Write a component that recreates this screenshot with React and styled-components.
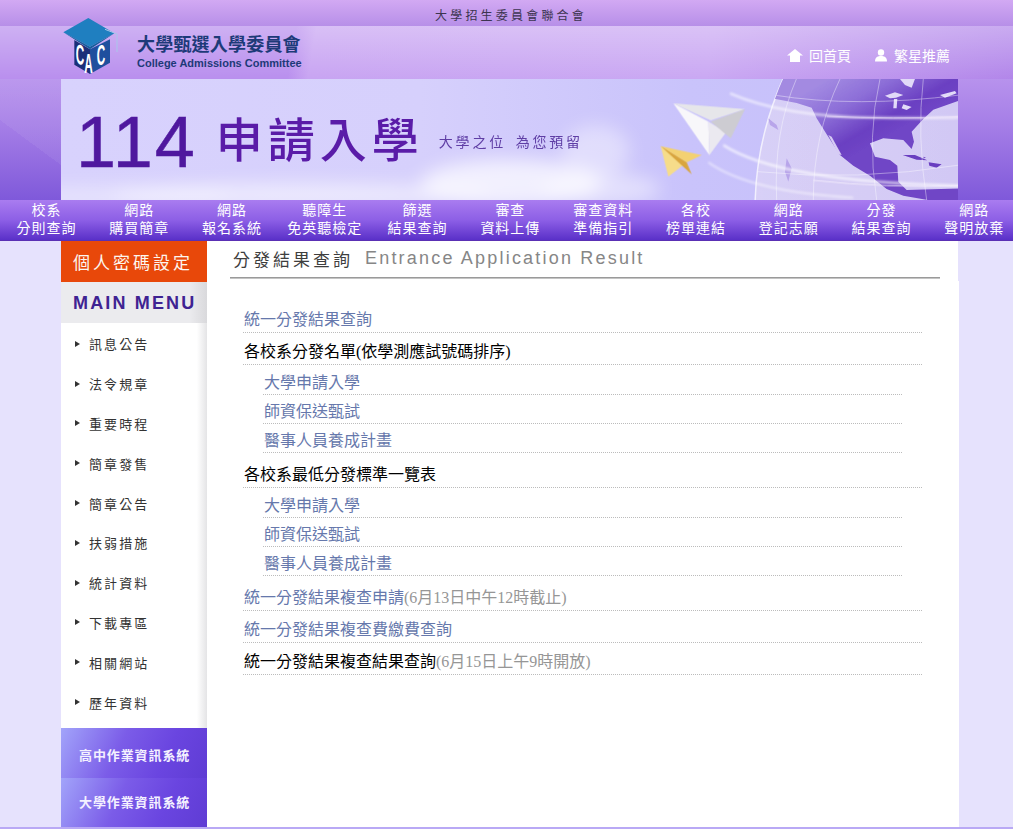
import styled, { createGlobalStyle } from 'styled-components';

const cjk = '"Noto Sans CJK TC", "Noto Sans CJK SC", sans-serif';

const GlobalStyle = createGlobalStyle`
  html, body {
    margin: 0;
    padding: 0;
    overflow-x: hidden;
    background: #e6e2fd;
    font-family: "Liberation Sans", ${cjk};
  }
  a { text-decoration: none; color: inherit; }
  ul { list-style: none; margin: 0; padding: 0; }
`;

const Page = styled.div`
  width: 1013px;
  height: 829px;
  overflow: hidden;
  background: #e6e2fd;
`;

const Hero = styled.header`
  height: 200px;
  background:
    linear-gradient(to top right, rgba(255,255,255,0) 50%, rgba(255,255,255,.06) 50%) 0 120px / 61px 45px no-repeat,
    linear-gradient(rgba(255,255,255,.06), rgba(255,255,255,.06)) 0 79px / 61px 41px no-repeat,
    linear-gradient(180deg, #c8a1f0 0, #bb96ee 70px, #a37ce6 130px, #7f59da 200px);
`;

const TopBar = styled.div`
  height: 26px;
  display: flex;
  align-items: center;
  justify-content: center;
  font-size: 12px;
  letter-spacing: 3.2px;
  color: #3c3450;
  padding: 2px 0 0 9px;
  box-sizing: border-box;
  background: linear-gradient(180deg, #d2a9f3, #b78fe8);
`;

const Band = styled.div`
  height: 53px;
  padding: 0 63px 0 62px;
  display: flex;
  align-items: center;
  justify-content: space-between;
  background:
    linear-gradient(180deg, rgba(255,255,255,.3), rgba(255,255,255,0)),
    linear-gradient(100deg, #b98fee 0 29%, #c8a4f2 31%, #caa8f3 70%, #b286ea 100%);
`;

const Brand = styled.div`
  display: flex;
  align-items: flex-start;
`;

const LogoMark = styled.svg`
  width: 60px;
  height: 60px;
  margin-top: -13px;
  margin-bottom: -3px;
  margin-right: 15px;
  flex: none;
  overflow: visible;
`;

const BrandText = styled.div`
  display: flex;
  flex-direction: column;
  margin-top: 2px;
`;

const BrandName = styled.div`
  font-size: 18px;
  line-height: 24px;
  font-weight: 700;
  letter-spacing: .2px;
  color: #1d3a78;
`;

const BrandSub = styled.div`
  font-size: 11px;
  line-height: 13px;
  font-weight: 700;
  color: #1d3a78;
`;

const QuickLinks = styled.nav`
  display: flex;
  gap: 23px;
  margin-top: 6px;
`;

const QuickLink = styled.a`
  display: flex;
  align-items: center;
  gap: 6px;
  font-size: 14px;
  color: #fff;
  line-height: 20px;
`;

const Banner = styled.div`
  position: relative;
  width: 897px;
  height: 121px;
  margin-left: 61px;
  overflow: hidden;
  display: flex;
  align-items: center;
  padding-left: 15px;
  box-sizing: border-box;
  background: linear-gradient(90deg, #d8d2fd 0, #d6d0fc 40%, #c9c3fb 70%, #c6bffa 100%);
`;

const BannerArt = styled.svg`
  position: absolute;
  inset: 0;
  width: 100%;
  height: 100%;
`;

const BannerYear = styled.div`
  position: relative;
  font-size: 72px;
  line-height: 72px;
  color: #4f189e;
  letter-spacing: 2px;
  margin-top: 4px;
  -webkit-text-stroke: .5px #4f189e;
`;

const BannerTitle = styled.h1`
  position: relative;
  margin: 0 0 6px 19px;
  font-family: ${cjk};
  font-size: 47px;
  line-height: 60px;
  font-weight: 500;
  letter-spacing: 5px;
  color: #5a1ca8;
`;

const BannerSlogan = styled.div`
  position: relative;
  margin: 3px 0 0 15px;
  font-size: 14px;
  letter-spacing: 2.8px;
  color: #5f3ea5;
  word-spacing: 3px;
`;

const MainNav = styled.nav`
  height: 40px;
  display: grid;
  grid-template-columns: repeat(11, 92.8px);
  background: linear-gradient(180deg, #a97cf0 0, #8d5fe6 50%, #5a30c8 100%);
  border-bottom: 1px solid #5a30b4;
`;

const NavItem = styled.a`
  display: flex;
  flex-direction: column;
  align-items: center;
  justify-content: center;
  padding-bottom: 2px;
  font-size: 14px;
  line-height: 18px;
  letter-spacing: 1px;
  color: #fff;
  white-space: nowrap;
`;

const Main = styled.main`
  height: 586px;
  margin-left: 61px;
  display: flex;
`;

const Sidebar = styled.aside`
  width: 146px;
  flex: none;
  display: flex;
  flex-direction: column;
  background: #fff;
`;

const PasswordButton = styled.a`
  height: 41px;
  box-sizing: border-box;
  padding: 0 0 1px 12px;
  display: flex;
  align-items: center;
  background: #e8480a;
  color: #fdf6ef;
  font-size: 17px;
  letter-spacing: 3px;
`;

const MenuTitle = styled.div`
  height: 41px;
  box-sizing: border-box;
  padding: 2px 0 0 12px;
  display: flex;
  align-items: center;
  background: linear-gradient(90deg, #ebebee 88%, #d9d9dc 100%);
  color: #3f2392;
  font-size: 18px;
  font-weight: 700;
  letter-spacing: 2.15px;
`;

const Menu = styled.ul`
  height: 405px;
  box-sizing: border-box;
  padding-top: 1px;
  background: linear-gradient(90deg, #fff 93%, #e4e4e6 100%);
`;

const MenuItem = styled.li`
  height: 39.8px;
  display: flex;
  align-items: center;
  padding-left: 14px;
  font-size: 13px;
  letter-spacing: 2.1px;
  color: #333;
  &::before {
    content: "";
    margin-right: 9px;
    border-left: 5px solid #333;
    border-top: 3.5px solid transparent;
    border-bottom: 3.5px solid transparent;
  }
`;

const SystemLink = styled.a`
  height: ${p => p.$h}px;
  box-sizing: border-box;
  padding: ${p => p.$pad};
  display: flex;
  align-items: center;
  background: linear-gradient(115deg, #a2a4fa 0, #7b5ce8 40%, #6a45e0 70%, #5f3cd4 100%);
  color: #f4f1ff;
  font-size: 13px;
  font-weight: 700;
  letter-spacing: .9px;
`;

const Content = styled.section`
  width: 752px;
  flex: none;
  background:
    linear-gradient(#fff, #fff) 0 40px / 752px 100% no-repeat,
    linear-gradient(#fff, #fff) 0 0 / 751px 40px no-repeat;
`;

const Heading = styled.div`
  height: 36px;
  box-sizing: content-box;
  margin: 0 19px 0 23px;
  padding-left: 3px;
  display: flex;
  align-items: flex-start;
  border-bottom: 1px solid #9a9a9a;
  box-shadow: 0 1px 0 #c4c4c4;
`;

const HeadingCn = styled.h2`
  margin: 5px 0 0;
  line-height: 25px;
  font-family: ${cjk};
  font-size: 17px;
  font-weight: 400;
  letter-spacing: 3px;
  color: #3e3e3e;
`;

const HeadingEn = styled.span`
  margin: 5px 0 0 12px;
  line-height: 24px;
  font-size: 18px;
  letter-spacing: 2.2px;
  color: #868686;
`;

const ResultList = styled.ul`
  margin: 23px 37px 0 36px;
  font-family: "Liberation Serif", ${cjk};
  font-size: 16px;
`;

const Row = styled.li`
  box-sizing: border-box;
  height: ${p => (p.$sub ? p.$h || 29 : 32)}px;
  margin-left: ${p => (p.$sub ? 20 : 0)}px;
  margin-right: ${p => (p.$sub ? 20 : 0)}px;
  margin-top: ${p => (p.$gap ? 3 : 0)}px;
  padding: 6px 0 0 1px;
  display: flex;
  align-items: center;
  border-bottom: 1px dotted #bcbcbc;
  color: ${p => (p.$plain ? '#000' : '#6678ac')};
  line-height: 20px;
`;

const Note = styled.span`
  color: #969696;
`;

const FootLine = styled.div`
  height: 2px;
  background: #b9a9f5;
`;

const navItems = [
  ['校系', '分則查詢'], ['網路', '購買簡章'], ['網路', '報名系統'], ['聽障生', '免英聽檢定'],
  ['篩選', '結果查詢'], ['審查', '資料上傳'], ['審查資料', '準備指引'], ['各校', '榜單連結'],
  ['網路', '登記志願'], ['分發', '結果查詢'], ['網路', '聲明放棄'],
];

const menuItems = ['訊息公告', '法令規章', '重要時程', '簡章發售', '簡章公告', '扶弱措施', '統計資料', '下載專區', '相關網站', '歷年資料'];

const rows = [
  { text: '統一分發結果查詢' },
  { text: '各校系分發名單(依學測應試號碼排序)', plain: true },
  { text: '大學申請入學', sub: true, h: 30 },
  { text: '師資保送甄試', sub: true },
  { text: '醫事人員養成計畫', sub: true },
  { text: '各校系最低分發標準一覽表', plain: true, gap: true },
  { text: '大學申請入學', sub: true, h: 30 },
  { text: '師資保送甄試', sub: true },
  { text: '醫事人員養成計畫', sub: true },
  { text: '統一分發結果複查申請', note: '(6月13日中午12時截止)', gap: true },
  { text: '統一分發結果複查費繳費查詢' },
  { text: '統一分發結果複查結果查詢', note: '(6月15日上午9時開放)', plain: true },
];

const logoLetter = { fill: '#fff', fontFamily: 'Liberation Sans', fontWeight: 700, fontSize: 84 };

const Logo = () => (
  <LogoMark viewBox="21 22 180 180">
    <polygon points="58,88 105,116 105,190 58,162" fill="#1b2f78" />
    <polygon points="105,116 165,86 165,156 105,190" fill="#1f4f9e" />
    <polygon points="25,65 100,22 178,68 105,108" fill="#1f7fc0" />
    <polygon points="25,65 105,108 178,68 105,116" fill="#14609c" />
    <path d="M150 56 L186 70 L186 124" fill="none" stroke="#a9c6ea" strokeWidth="3" />
    <text {...logoLetter} transform="translate(62 158) skewY(14) scale(.42 1)">C</text>
    <text {...logoLetter} transform="translate(88 188) scale(.42 1)">A</text>
    <text {...logoLetter} transform="translate(125 165) skewY(-14) scale(.42 1)">C</text>
  </LogoMark>
);

const BannerDrawing = () => (
  <BannerArt viewBox="0 0 897 121" preserveAspectRatio="none">
    <defs>
      <filter id="soft" x="-30%" y="-30%" width="160%" height="160%"><feGaussianBlur stdDeviation="9" /></filter>
      <filter id="glow" x="-10%" y="-50%" width="120%" height="200%"><feGaussianBlur stdDeviation="3" /></filter>
      <linearGradient id="sea" x1="0" x2="1">
        <stop offset="0" stopColor="#d8d0f7" />
        <stop offset=".35" stopColor="#d2c8f4" />
        <stop offset="1" stopColor="#b8a4ea" />
      </linearGradient>
      <linearGradient id="land" gradientUnits="userSpaceOnUse" x1="560" y1="12" x2="680" y2="220">
        <stop offset="0" stopColor="#a38be2" />
        <stop offset=".4" stopColor="#8d6fd8" />
        <stop offset=".8" stopColor="#6b40c2" />
        <stop offset="1" stopColor="#7046c6" />
      </linearGradient>
      <clipPath id="globe"><circle cx="1014" cy="131" r="320" /></clipPath>
    </defs>
    <g filter="url(#soft)" fill="#fff">
      <ellipse cx="40" cy="118" rx="130" ry="10" opacity=".4" />
      <ellipse cx="240" cy="116" rx="190" ry="12" opacity=".55" />
      <ellipse cx="450" cy="104" rx="90" ry="24" opacity=".7" />
      <ellipse cx="535" cy="72" rx="34" ry="26" opacity=".4" />
      <ellipse cx="540" cy="110" rx="60" ry="16" opacity=".45" />
    </g>
    <circle cx="1014" cy="131" r="320" fill="url(#sea)" stroke="#fff" strokeOpacity=".7" strokeWidth="1.5" />
    <g clipPath="url(#globe)">
      <g transform="translate(579 -4) scale(.3333)">
        <path fill="url(#land)" d="M425 12 L395 70 L470 84 L515 98 L530 130 L560 178 L600 240 L640 272 L690 302 L740 342 L790 362 L880 378 L960 380 L960 340 L800 345 L775 320 L772 272 L750 255 L705 245 L690 205 L730 190 L790 195 L815 222 L822 200 L815 170 L850 132 L880 104 L960 76 L960 12 Z" />
        <path fill="#d6cbf4" d="M565 180 L575 185 L605 240 L595 238 Z" />
        <path fill="#e2daf8" d="M735 62 L765 52 L790 60 L768 68 L750 70 Z M762 72 L772 72 L770 100 L760 100 Z M790 88 L815 96 L800 105 L785 100 Z M900 60 L945 48 L950 55 L915 68 Z" />
        <path fill="#e2daf8" d="M780 12 L825 12 L815 38 L795 30 Z" />
        <path fill="#6a3fc0" d="M788 240 L825 240 L862 256 L830 254 Z M866 262 L905 268 L890 278 L868 272 Z M850 245 L858 248 L852 250 Z" />
        <path fill="#b8a6ea" d="M385 130 L410 150 L415 165 L390 150 Z M440 250 L455 280 L445 320 L435 290 Z" />
        <g fill="none" stroke="#fff" strokeWidth="2" opacity=".6">
          <path d="M470 10 Q400 170 410 375" />
          <path d="M600 12 Q520 180 520 375" />
          <path d="M720 12 Q680 180 710 375" />
          <path d="M850 12 Q830 180 860 375" />
          <path d="M400 60 Q650 100 960 60" />
          <path d="M352 290 Q650 320 960 270" />
        </g>
      </g>
    </g>
    <g transform="translate(579 -4) scale(.3333)" fill="none">
      <g stroke="#fff" filter="url(#glow)">
        <path d="M270 55 Q430 125 700 128 T960 125" strokeWidth="6" opacity=".7" />
        <path d="M250 210 Q420 320 960 332" strokeWidth="7" opacity=".75" />
        <path d="M205 262 Q330 350 640 368" strokeWidth="5" opacity=".6" />
      </g>
      <path d="M560 124 Q760 134 960 125" stroke="#f2e6fb" strokeWidth="3" opacity=".85" />
      <path d="M520 316 Q740 340 960 332" stroke="#f6f0fd" strokeWidth="3" opacity=".8" />
      <polygon points="100,85 205,140 208,240" fill="#f8f7fa" />
      <polygon points="205,140 208,240 258,172" fill="#ebe9f0" />
      <polygon points="100,85 315,102 212,136" fill="#e6e6ea" />
      <polygon points="212,140 315,102 272,190" fill="#cdccd2" />
      <polygon points="62,213 185,240 140,262" fill="#f3d172" />
      <polygon points="62,213 140,262 85,305" fill="#f6dc8a" />
      <polygon points="62,213 140,262 155,298" fill="#d9a53e" />
    </g>
  </BannerArt>
);

const App = () => (
  <Page>
    <GlobalStyle />
    <Hero>
      <TopBar>大學招生委員會聯合會</TopBar>
      <Band>
        <Brand>
          <Logo />
          <BrandText>
            <BrandName>大學甄選入學委員會</BrandName>
            <BrandSub>College Admissions Committee</BrandSub>
          </BrandText>
        </Brand>
        <QuickLinks>
          <QuickLink href="#">
            <svg width="16" height="14" viewBox="0 0 16 14"><path fill="#fff" d="M8 0 L16 6.5 L13 6.5 L13 13 L3 13 L3 6.5 L0 6.5 Z" /></svg>
            回首頁
          </QuickLink>
          <QuickLink href="#">
            <svg width="14" height="13" viewBox="0 0 14 13"><circle cx="7" cy="3.5" r="3.2" fill="#fff" /><path fill="#fff" d="M1 12.5 C1 8 4 7 7 7 C10 7 13 8 13 12.5 Z" /></svg>
            繁星推薦
          </QuickLink>
        </QuickLinks>
      </Band>
      <Banner>
        <BannerDrawing />
        <BannerYear>114</BannerYear>
        <BannerTitle>申請入學</BannerTitle>
        <BannerSlogan>大學之位 為您預留</BannerSlogan>
      </Banner>
    </Hero>
    <MainNav>
      {navItems.map(([a, b], i) => (
        <NavItem href="#" key={i}><span>{a}</span><span>{b}</span></NavItem>
      ))}
    </MainNav>
    <Main>
      <Sidebar>
        <PasswordButton href="#">個人密碼設定</PasswordButton>
        <MenuTitle>MAIN MENU</MenuTitle>
        <Menu>
          {menuItems.map(m => <MenuItem key={m}>{m}</MenuItem>)}
        </Menu>
        <SystemLink href="#" $h={50} $pad="2px 0 0 18px">高中作業資訊系統</SystemLink>
        <SystemLink href="#" $h={49} $pad="0 0 2px 18px">大學作業資訊系統</SystemLink>
      </Sidebar>
      <Content>
        <Heading>
          <HeadingCn>分發結果查詢</HeadingCn>
          <HeadingEn>Entrance Application Result</HeadingEn>
        </Heading>
        <ResultList>
          {rows.map((r, i) => (
            <Row key={i} $sub={r.sub} $h={r.h} $gap={r.gap} $plain={r.plain}>
              <span>{r.text}{r.note && <Note>{r.note}</Note>}</span>
            </Row>
          ))}
        </ResultList>
      </Content>
    </Main>
    <FootLine />
  </Page>
);

export default App;
